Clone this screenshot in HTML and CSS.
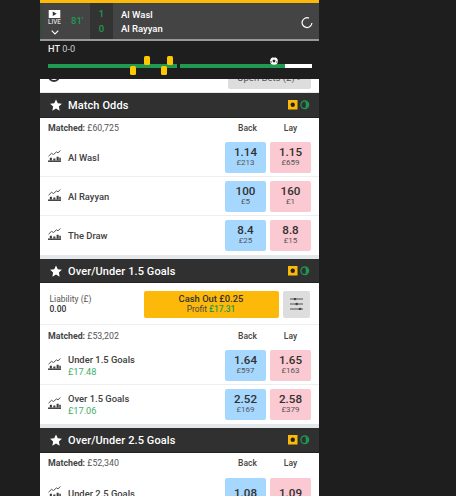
FILE: index.html
```html
<!DOCTYPE html>
<html lang="en">
<head>
<meta charset="utf-8">
<title>Al Wasl v Al Rayyan</title>
<link rel="stylesheet" href="styles.css">
</head>
<body>
<svg class="defs" width="0" height="0" aria-hidden="true">
  <symbol id="star" viewBox="0 0 24 24"><path d="M12 .8l3.500 7.600 8.300 1-6.100 5.700 1.600 8.200L12 19.200l-7.300 4.100 1.600-8.200L.2 9.400l8.300-1z"/></symbol>
  <symbol id="chart" viewBox="0 0 13 12"><path d="M.5 6.200 3.500 3.300 5.500 4.500 8.500 1.900 10 2.800 12.500.4" fill="none" stroke="#555" stroke-width="1"/><path d="M0 10.500h13v1.400H0z" fill="#333"/><path d="M1.800 7.800h2.100v2.700H1.800zM5.300 8.400h2.100v2.100H5.300zM8.600 6.800h2.100v3.700H8.600zM11.300 7.800h1.500v2.700h-1.500z" fill="#3a3a3a"/></symbol>
  <symbol id="inplay" viewBox="0 0 22 10"><rect x="0" y="0" width="9.500" height="9.500" fill="#fdb90a"/><circle cx="4.750" cy="4.750" r="2.200" fill="#222"/><circle cx="16.800" cy="4.750" r="3.900" fill="none" stroke="#1f9a50" stroke-width="1.200"/><path d="M16.800 .9a3.900 3.900 0 0 1 0 7.700c1.500-2.500 1.500-5.200 0-7.700z" fill="#1f9a50"/></symbol>
</svg>
<main class="app">
  <div class="topline"></div>
  <header class="score">
    <div class="live">
      <svg class="live-icon" viewBox="0 0 13 9"><rect width="13" height="9" fill="#fff"/><path d="M4.500 1.800v5l4.500-2.500z" fill="#333"/></svg>
      <span class="live-text">LIVE</span>
      <svg class="chev" viewBox="0 0 8 5"><path d="M.7.7 4 4 7.300.7" fill="none" stroke="#fff" stroke-width="1.100"/></svg>
    </div>
    <div class="minute">81'</div>
    <div class="goals"><span>1</span><span>0</span></div>
    <div class="teams"><span>Al Wasl</span><span>Al Rayyan</span></div>
    <svg class="refresh" viewBox="0 0 12 12"><path d="M7.900 1.100A4.900 4.900 0 1 0 10.900 6" fill="none" stroke="#fff" stroke-width="1.200"/></svg>
  </header>
  <section class="timeline">
    <div class="ht"><b>HT</b> 0-0</div>
    <div class="track">
      <div class="half half-one">
        <i class="card card-up first"></i><i class="card card-up second"></i>
        <i class="card card-down third"></i><i class="card card-down fourth"></i>
      </div>
      <div class="half half-two">
        <div class="played"></div>
        <svg class="ball" viewBox="0 0 10 10"><circle cx="5" cy="5" r="4.800" fill="#fff"/><path d="M5 3.100l1.900 1.400-.7 2.200H3.800l-.7-2.200zM3.600.7 5 1.700 6.400.7zM.7 6l1.300-.6.500 2zM9.300 6 8 5.400l-.5 2z" fill="#222"/></svg>
      </div>
    </div>
  </section>
  <div class="clipped">
    <svg class="info" viewBox="0 0 14 14"><circle cx="7" cy="7" r="5" fill="none" stroke="#333" stroke-width="2"/></svg>
    <div class="open-bets">Open Bets (2) <span class="arrow">&gt;</span></div>
  </div>
  <div class="gap-line"></div>

  <section class="market">
    <h2 class="market-head"><svg class="star"><use href="#star"/></svg><span>Match Odds</span><svg class="inplay"><use href="#inplay"/></svg></h2>
    <div class="matched"><span class="m-text"><b>Matched:</b> £60,725</span><span class="col">Back</span><span class="col">Lay</span></div>
    <div class="runner"><svg class="chart"><use href="#chart"/></svg><div class="name">Al Wasl</div><div class="odd back"><b>1.14</b><span>£213</span></div><div class="odd lay"><b>1.15</b><span>£659</span></div></div>
    <div class="runner"><svg class="chart"><use href="#chart"/></svg><div class="name">Al Rayyan</div><div class="odd back"><b>100</b><span>£5</span></div><div class="odd lay"><b>160</b><span>£1</span></div></div>
    <div class="runner"><svg class="chart"><use href="#chart"/></svg><div class="name">The Draw</div><div class="odd back"><b>8.4</b><span>£25</span></div><div class="odd lay"><b>8.8</b><span>£15</span></div></div>
  </section>

  <section class="market">
    <h2 class="market-head"><svg class="star"><use href="#star"/></svg><span>Over/Under 1.5 Goals</span><svg class="inplay"><use href="#inplay"/></svg></h2>
    <div class="cashout-row">
      <div class="liability"><span>Liability (£)</span><b>0.00</b></div>
      <div class="cashout"><b>Cash Out £0.25</b><span>Profit <em>£17.31</em></span></div>
      <div class="filters">
        <svg viewBox="0 0 13 12"><path d="M0 1h13M0 6h13M0 11h13" stroke="#444" stroke-width=".9"/><circle cx="5" cy="1" r="1.300" fill="#444"/><circle cx="6.700" cy="6" r="1.300" fill="#444"/><circle cx="10" cy="11" r="1.300" fill="#444"/></svg>
      </div>
    </div>
    <div class="matched"><span class="m-text"><b>Matched:</b> £53,202</span><span class="col">Back</span><span class="col">Lay</span></div>
    <div class="runner"><svg class="chart"><use href="#chart"/></svg><div class="name">Under 1.5 Goals<em>£17.48</em></div><div class="odd back"><b>1.64</b><span>£597</span></div><div class="odd lay"><b>1.65</b><span>£163</span></div></div>
    <div class="runner"><svg class="chart"><use href="#chart"/></svg><div class="name">Over 1.5 Goals<em>£17.06</em></div><div class="odd back"><b>2.52</b><span>£169</span></div><div class="odd lay"><b>2.58</b><span>£379</span></div></div>
  </section>

  <section class="market">
    <h2 class="market-head"><svg class="star"><use href="#star"/></svg><span>Over/Under 2.5 Goals</span><svg class="inplay"><use href="#inplay"/></svg></h2>
    <div class="matched"><span class="m-text"><b>Matched:</b> £52,340</span><span class="col">Back</span><span class="col">Lay</span></div>
    <div class="runner"><svg class="chart"><use href="#chart"/></svg><div class="name">Under 2.5 Goals</div><div class="odd back"><b>1.08</b></div><div class="odd lay"><b>1.09</b></div></div>
  </section>
</main>
</body>
</html>
```
FILE: styles.css
```css
* { box-sizing: border-box; }
html, body { margin: 0; height: 496px; overflow: hidden; }
body { background: #1e1e1e; font-family: Roboto, "Liberation Sans", sans-serif; color: #303030; }
.defs { position: absolute; }
.app { width: 279px; height: 496px; margin-left: 40px; overflow: hidden; background: #e5e8eb; }
.topline { height: 3px; background: #fdb90a; }

.score { display: flex; height: 36px; background: linear-gradient(90deg, #36483c 0, #444 5px); color: #fff; }
.live { width: 24px; padding: 7px 0 0 5px; display: flex; flex-direction: column; align-items: center; }
.live-icon { width: 13px; height: 8px; flex: none; }
.live-text { font-size: 6.300px; line-height: 7px; margin-top: 1px; color: #ddd; font-weight: 500; }
.chev { width: 8px; height: 5px; margin-top: 4px; flex: none; }
.minute { width: 26px; padding-left: 7px; font-size: 9.500px; font-weight: 500; color: #1f9a50; line-height: 36px; }
.goals { width: 23px; background: #333; display: flex; flex-direction: column; align-items: center; font-size: 9.500px; font-weight: 500; color: #1f9a50; padding-top: 3px; }
.goals span { height: 14.500px; line-height: 15px; }
.teams { flex: 1; display: flex; flex-direction: column; padding: 5px 0 0 8px; font-size: 9.500px; font-weight: 500; color: #fff; }
.teams span { height: 13.500px; line-height: 13.500px; }
.refresh { width: 12px; height: 12px; margin: 14px 6px 0 0; flex: none; }

.timeline { height: 40px; background: #1e1e1e; border-top: 2px solid #999; padding: 1px 0 0 8px; color: #ccc; }
.ht { font-size: 9.200px; line-height: 13px; }
.ht b { font-weight: 500; color: #eee; }
.track { display: flex; gap: 3px; margin-top: 9px; }
.half { height: 4px; position: relative; background: #1f9a50; }
.half-one { width: 129px; }
.half-two { width: 132px; background: #fff; }
.played { width: 105px; height: 4px; background: #1f9a50; }
.card { position: absolute; width: 6px; height: 9px; border-radius: 1.500px; background: #fdc800; }
.card-up { bottom: 3px; }
.card-down { top: 2px; }
.first { left: 96px; }
.second { left: 119px; }
.third { left: 82px; }
.fourth { left: 113px; }
.ball { position: absolute; left: 90px; top: -7px; width: 8px; height: 8px; }

.clipped { height: 13px; background: #fff; position: relative; overflow: hidden; }
.info { position: absolute; left: 7px; top: -10px; width: 14px; height: 14px; }
.open-bets { position: absolute; left: 188px; bottom: 3px; width: 83px; height: 20px; border-radius: 2px; background: #ddd; font-size: 9.500px; line-height: 17px; text-align: center; color: #555; }
.gap-line { height: 1px; background: #e5e8eb; }

.market + .market { padding-top: 4.400px; }
.market-head { display: flex; align-items: center; margin: 0; height: 24.500px; padding: 1px 9.500px 0; background: #303030; color: #fff; font-size: 11px; font-weight: 500; letter-spacing: .1px; border-bottom: 1px solid #222; }
.star { width: 12px; height: 12px; fill: #fff; margin-right: 6.500px; flex: none; }
.market-head span { flex: 1; }
.inplay { width: 22px; height: 10px; flex: none; }

.matched { display: flex; align-items: center; height: 21px; padding: 0 8px; background: #fff; font-size: 8.800px; }
.m-text { flex: 1; color: #555; }
.m-text b { font-weight: 700; color: #444; }
.col { width: 41px; text-align: center; font-weight: 500; font-size: 8.500px; margin-left: 4px; color: #444; }
.m-text + .col { padding-left: 4px; }

.runner { display: flex; align-items: center; height: 38.700px; padding: 0 8px; background: #fff; border-bottom: 1px solid #eee; }
.market .runner:last-child { border-bottom: 0; }
.chart { width: 13px; height: 12px; margin: 0 7px 2px 0; flex: none; }
.name { flex: 1; padding-top: .5px; font-size: 9.400px; font-weight: 500; color: #404040; display: flex; flex-direction: column; line-height: 11.500px; }
.name em { font-style: normal; font-weight: 400; font-size: 9.200px; color: #3fae6a; }
.odd { width: 41px; height: 31px; margin-left: 4px; border-radius: 2px; display: flex; flex-direction: column; align-items: center; justify-content: center; flex: none; }
.odd b { font-size: 11.600px; line-height: 12px; font-weight: 500; color: #303030; }
.odd span { font-size: 8px; line-height: 10px; color: #555; }
.back { background: #a6d8ff; }
.lay { background: #fac9d1; }

.cashout-row { display: flex; align-items: center; height: 42px; padding: 1px 9.500px 0; background: #fff; border-bottom: 1px solid #eee; }
.liability { flex: 1; display: flex; flex-direction: column; font-size: 8.500px; line-height: 10px; color: #555; }
.liability b { font-weight: 500; color: #303030; }
.cashout { width: 135px; height: 26.500px; border-radius: 2px; background: #fdb90a; display: flex; flex-direction: column; align-items: center; justify-content: center; font-size: 8.400px; line-height: 9.500px; color: #444; }
.cashout b { font-size: 9.400px; line-height: 10.500px; font-weight: 500; color: #303030; }
.cashout em { font-style: normal; font-weight: 500; color: #1f9a50; }
.filters { width: 27px; height: 26.500px; margin-left: 4px; border-radius: 2px; background: #ddd; display: flex; align-items: center; justify-content: center; flex: none; }
.filters svg { width: 13px; height: 12px; }
```
